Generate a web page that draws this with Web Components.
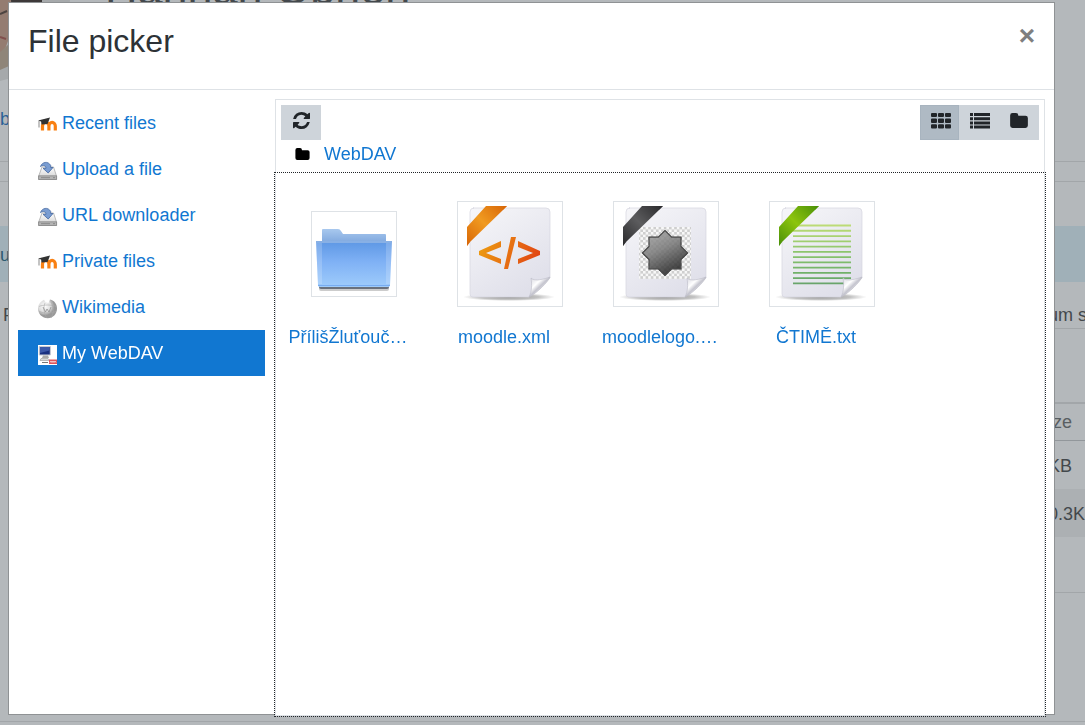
<!DOCTYPE html>
<html lang="en">
<head>
<meta charset="utf-8">
<title>File picker</title>
<style>
html, body {
  margin: 0;
  height: 100%;
}
body {
  font: 18px/22px "Liberation Sans", Arial, sans-serif;
  color: #343a40;
  background: #b4b8bb;
  overflow: hidden;
  --link: #1177d1;
  --line: #dee2e6;
}
</style>
</head>
<body>
<course-page></course-page>
<file-picker heading="File picker">
  <repo-item slot="repos" icon="moodle">Recent files</repo-item>
  <repo-item slot="repos" icon="drive">Upload a file</repo-item>
  <repo-item slot="repos" icon="drive">URL downloader</repo-item>
  <repo-item slot="repos" icon="moodle">Private files</repo-item>
  <repo-item slot="repos" icon="globe">Wikimedia</repo-item>
  <repo-item slot="repos" icon="computer" active>My WebDAV</repo-item>
  <picker-toolbar slot="toolbar" path="WebDAV"></picker-toolbar>
  <file-tile kind="folder">PřílišŽluťouč…</file-tile>
  <file-tile kind="xml">moodle.xml</file-tile>
  <file-tile kind="image">moodlelogo.…</file-tile>
  <file-tile kind="text">ČTIMĚ.txt</file-tile>
</file-picker>

<script>
const glyphs = {
  refresh: `<svg width="17" height="17" viewBox="0 0 1536 1536" fill="currentColor" aria-hidden="true"><path d="M1511 928q0 5-1 7-64 268-268 434.500t-478 166.500q-146 0-282.500-55t-243.500-157l-129 129q-19 19-45 19t-45-19-19-45v-448q0-26 19-45t45-19h448q26 0 45 19t19 45-19 45l-137 137q71 66 161 102t187 36q134 0 250-65t186-179q11-17 53-117 8-23 30-23h192q13 0 22.500 9.500t9.500 22.500zm25-800v448q0 26-19 45t-45 19h-448q-26 0-45-19t-19-45 19-45l138-138q-148-137-349-137-134 0-250 65t-186 179q-11 17-53 117-8 23-30 23h-199q-13 0-22.500-9.500t-9.500-22.500v-7q65-268 270-434.500t480-166.500q146 0 284 55.500t245 156.500l130-129q19-19 45-19t45 19 19 45z"/></svg>`,
  grid: `<svg width="20" height="16" viewBox="0 0 20 16" fill="currentColor" aria-hidden="true"><path d="M1 0h4q1 0 1 1v2q0 1-1 1H1q-1 0-1-1V1q0-1 1-1zm7 0h4q1 0 1 1v2q0 1-1 1H8q-1 0-1-1V1q0-1 1-1zm7 0h4q1 0 1 1v2q0 1-1 1h-4q-1 0-1-1V1q0-1 1-1zM1 5.500h4q1 0 1 1v2.500q0 1-1 1H1q-1 0-1-1V6.500q0-1 1-1zm7 0h4q1 0 1 1v2.500q0 1-1 1H8q-1 0-1-1V6.500q0-1 1-1zm7 0h4q1 0 1 1v2.500q0 1-1 1h-4q-1 0-1-1V6.500q0-1 1-1zM1 11.200h4q1 0 1 1v2.300q0 1-1 1H1q-1 0-1-1v-2.300q0-1 1-1zm7 0h4q1 0 1 1v2.300q0 1-1 1H8q-1 0-1-1v-2.300q0-1 1-1zm7 0h4q1 0 1 1v2.300q0 1-1 1h-4q-1 0-1-1v-2.300q0-1 1-1z"/></svg>`,
  list: `<svg width="20" height="16" viewBox="0 0 20 16" fill="currentColor" aria-hidden="true"><path d="M0 0h3v3H0zM4 0h16v3H4zM0 4.200h3v3H0zM4 4.200h16v3H4zM0 8.400h3v3H0zM4 8.400h16v3H4zM0 12.500h3v3H0zM4 12.500h16v3H4z"/></svg>`,
  folder: `<svg viewBox="0 0 1664 1408" fill="currentColor" aria-hidden="true"><path d="M0 224Q0 0 224 0h320q224 0 224 224v32h672q224 0 224 224v704q0 224-224 224H224q-224 0-224-224z"/></svg>`
};

const repoIcons = {
  moodle: `<path d="M4.500 15.500V11a3.200 3.600 0 0 1 6.400 0v4.500M10.900 15.500V11a3.200 3.600 0 0 1 6.400 0v4.500" fill="none" stroke="#f98012" stroke-width="3.200"/><path d="M0 5.500 12 2.500l-1.500 4-1 2.500-6 .6-.4-3.200z" fill="#333"/><path d="M1 6v6.500" stroke="#888"/>`,
  drive: `<defs><linearGradient id="d" x2="0" y2="1"><stop stop-color="#fff"/><stop offset="1" stop-color="#ccc"/></linearGradient></defs>
    <path d="M4 6h11.500l3 9v3.500H.7V15z" fill="url(#d)" stroke="#aaa" stroke-width=".8"/><path d="M.6 14.800h18v3.700H.6z" fill="#b4b4b4" stroke="#808080" stroke-width=".7"/><path d="M3 16.700h9m3 0h2" stroke="#888"/>
    <path d="M2.500 5.500C4 1 10-.5 12.700 4.500v2H15L10.200 12 5 7.300h3C7.800 4.500 5.500 3.800 2.500 5.500z" fill="#7a9dd2" stroke="#41669f" stroke-width=".8"/>`,
  globe: `<defs><radialGradient id="g" cx=".35" cy=".35"><stop stop-color="#fff"/><stop offset=".65" stop-color="#dcdcdc"/><stop offset="1" stop-color="#999"/></radialGradient></defs>
    <path d="M4 2 6 .8l1.500 2.400L10.500 4 12 .5c4.500 1 7 4.500 7 9 0 5.500-4 9.700-9.300 9.700S0 15 0 9.500C0 6.500 1.500 3.500 4 2z" fill="url(#g)"/>
    <path d="M1 7.500c4-2 13-2 17 0M1 12.500c5 2 13 2 17 0M7 4c-2 5-1 11 2 15M13 3c3 5 3 11 0 16" fill="none" stroke="#aaa" stroke-width=".6"/><path d="M5 8l2.500 5 1.500-3 2 3 2-5" fill="none" stroke="#888" stroke-width=".7"/>`,
  computer: `<path d="M0 0h19v20H0z" fill="#fff"/><path d="M1.300 1.500h11v8.500h-11z" fill="#1a3080" stroke="#c7cad2"/><path d="M2 2h9.500v3.500L2 8z" fill="#3c58a8"/><path d="M5 10.500h5l1 2.500H4z" fill="#aaa"/><path d="M3 13.500h7l1.500 2H2z" fill="#d8d8d8" stroke="#999" stroke-width=".6"/><path d="M4 17.500h6" stroke="#777"/><path d="M11 14.500h8V19h-8z" fill="#df555c"/><path d="M12 17.500l1-1.500 1 1.500 1-1.500 1 1.500 1-1.500 1 1.500" fill="none" stroke="#fff" stroke-width=".7"/>`
};

// white sheet with a curled corner and a coloured ribbon, contents drawn in between
function sheet(dark, light, inner) {
  return `<svg width="96" height="96" viewBox="1 0 96 96" aria-hidden="true">
<defs>
  <linearGradient id="page" x2=".6" y2="1"><stop stop-color="#f6f6f9"/><stop offset="1" stop-color="#e0e0ea"/></linearGradient>
  <linearGradient id="ribbon" gradientUnits="userSpaceOnUse" x1="6" y1="38" x2="44" y2="0"><stop stop-color="${dark}"/><stop offset=".5" stop-color="${light}"/><stop offset="1" stop-color="${dark}"/></linearGradient>
  <linearGradient id="curl" x1="0" y1="0" x2="1" y2="1"><stop stop-color="#d0d0da"/><stop offset=".35" stop-color="#fff"/><stop offset=".5" stop-color="#c4c4ce"/><stop offset=".65" stop-color="#eee"/></linearGradient>
  <radialGradient id="shadow"><stop stop-color="#777" stop-opacity=".8"/><stop offset=".65" stop-color="#888" stop-opacity=".5"/><stop offset="1" stop-color="#999" stop-opacity="0"/></radialGradient>
</defs>
<ellipse cx="48" cy="91" rx="46" ry="4" fill="url(#shadow)"/>
<path d="M12 2h73q4 0 4 4v66L68 91H12q-3 0-3-3V6q0-4 4-4z" fill="url(#page)" stroke="#d5d5df" stroke-width=".7"/>
${inner}
<path d="M68 91c3-6 3-12 2-19 4 4 13 1 19-1-1 4-14 17-21 20z" fill="url(#curl)" stroke="#bbbbc6" stroke-width=".6"/>
<path d="M25 0h21l-4 4L9 36l-3 4V21z" fill="url(#ribbon)"/><path d="M46 0l-4 4V0zM6 40l3-4H6z" fill="${dark}" opacity=".6"/></svg>`;
}

const textLines = Array.from({ length: 12 }, (_, i) =>
  `<path d="M20 ${19.500 + i * 5.270}h58" stroke="hsl(${78 + i * 4} ${58 - i * 3}% ${66 - i * 1.200}%)" stroke-width="1.800"/>`).join("");

const star = "M70.500 47 63.900 53.600 64 63 54.600 62.900 48 69.500 41.400 62.900 32 63 32.100 53.600 25.500 47 32.100 40.400 32 31 41.400 31.100 48 24.500 54.600 31.100 64 31 63.900 40.400z";

const thumbs = {
  folder: `<svg width="76" height="76" viewBox="0 0 76 76" aria-hidden="true">
<defs><linearGradient id="front" x2="0" y2="1"><stop stop-color="#5d97e4"/><stop offset=".45" stop-color="#7fb1f5"/><stop offset="1" stop-color="#9fccfb"/></linearGradient>
<linearGradient id="back" x2="0" y2="1"><stop stop-color="#a8c8ee"/><stop offset="1" stop-color="#82aadf"/></linearGradient></defs>
<rect x="3" y="70" width="70" height="5" rx="2" fill="#ccc"/><rect x="3" y="69" width="70" height="4" rx="2" fill="#6a717c"/>
<path d="M6 26V14q0-1 1-1h15q2 0 3 2l2 3h42q1 0 1 1v7z" fill="url(#back)"/>
<path d="M0 25h76l-2 44q0 2-2 2H4q-2 0-2-2z" fill="url(#front)"/><path d="M0 25h76v2H0z" fill="#88b0e5"/><path d="M0 27h6v41H2zM76 27h-6v41h4z" fill="#fff" opacity=".18"/><path d="M2 69h72v1H2z" fill="#78acf0"/></svg>`,
  xml: sheet("#d96808", "#f09a20", `<defs><linearGradient id="code" gradientUnits="userSpaceOnUse" x1="17" y1="35" x2="75" y2="60"><stop stop-color="#eda010"/><stop offset="1" stop-color="#e14414"/></linearGradient></defs>
<path d="M40 35v6l-15 6 15 6v5L18 49v-4zM57 35v6l15 6-15 6v5l22-9v-4zM50 31h5L47 63h-4z" fill="url(#code)"/>`),
  image: sheet("#2c2c2e", "#5c5c5e", `<defs><pattern id="check" width="5.200" height="5.200" patternUnits="userSpaceOnUse"><path d="M0 0h6v6H0z" fill="#f8f8f8"/><path d="M0 0h2.600v2.600H0zM2.600 2.600h2.600v2.600H2.600z" fill="#cfcfcf"/></pattern>
<linearGradient id="star" x1="0" y1="0" x2=".5" y2="1"><stop stop-color="#aaa"/><stop offset=".5" stop-color="#777"/><stop offset="1" stop-color="#222"/></linearGradient></defs>
<path d="M22 21h52v52H22z" fill="url(#check)"/>
<path d="${star}" fill="url(#star)" stroke="#333" stroke-width="1.200"/>
<path d="${star}" fill="url(#check)" opacity=".15"/>`),
  text: sheet("#4d9208", "#8cc40e", textLines)
};

const templatePage = document.createElement("template");
templatePage.innerHTML = `
<style>
:host {
  display: block;
  color: #43484c;
}
.hero {
  display: flex;
  gap: 32px;
  height: 81px;
}
.hero svg { flex: none; }
h1 {
  margin: -37px 0 0;
  font-size: 45px;
  line-height: 52px;
  font-weight: 400;
}
.contact {
  height: 80px;
  line-height: 76px;
  border-bottom: 1px solid #a2a6a9;
}
a { color: #2a6196; text-decoration: none; }
.tabs { height: 19px; border-bottom: 1px solid #a2a6a9; }
.columns { display: flex; padding-top: 44px; }
.main { flex: 1; }
.side { width: 37px; white-space: nowrap; }
.info {
  height: 56px;
  line-height: 58px;
  color: #2c5a70;
  background: #a0b0b8;
}
.desc {
  padding: 22px 3px 2px;
}
.side .desc { padding: 22px 0 2px; border-bottom: 1px solid #a2a6a9; }
table {
  width: 100%;
  margin-top: 73px;
  border-collapse: collapse;
  border-bottom: 1px solid #a2a6a9;
}
th {
  height: 36px;
  padding: 0 5px;
  font-weight: 400;
  text-align: left;
  color: #595e62;
  border-top: 2px solid #a2a6a9;
  border-bottom: 1px solid #92979b;
}
td { height: 46px; padding: 2px 0 0; }
.even td { background: #acb0b3; }
.end td { height: 53px; }
footer { margin-top: 128px; border-top: 1px solid #a2a6a9; }
</style>
<div class="hero">
  <svg width="73" height="81" viewBox="0 0 73 81" aria-hidden="true"><path d="M0 0h73v81H0z" fill="#b4b8bb"/><path d="M0 0h70Q64 66 0 81z" fill="#a6a9ab"/><path d="M0 0h42v24H0z" fill="#3d3939"/><path d="M0 0h11q3 40-11 56z" fill="#947c71"/><path d="M0 52 9 44v22l-9 4z" fill="#8f8579"/><path d="M0 14 7 11" stroke="#4d4441" stroke-width="2"/><path d="M0 37l6 2" stroke="#814f4c" stroke-width="2"/></svg>
  <h1>Hannah Obrien</h1>
</div>
<div class="contact"><a href="#">b</a></div>
<div class="tabs"></div>
<div class="columns">
  <div class="main">
    <div class="info">u</div>
    <div class="desc">P</div>
  </div>
  <div class="side">
    <div class="info"></div>
    <div class="desc">um s</div>
    <table>
      <tr><th>ze</th></tr>
      <tr><td>KB</td></tr>
      <tr class="even"><td>0.3K</td></tr>
      <tr class="end"><td></td></tr>
    </table>
  </div>
</div>
<footer></footer>
`;

class CoursePage extends HTMLElement {
  constructor() {
    super();
    this.attachShadow({ mode: "open" });
    this.shadowRoot.appendChild(templatePage.content.cloneNode(true));
  }
}

const templatePicker = document.createElement("template");
templatePicker.innerHTML = `
<style>
:host {
  position: fixed;
  inset: 0;
  display: flex;
  padding: 2px 30px 10px 8px;
}
.dialog {
  flex: 1;
  display: flex;
  flex-direction: column;
  background: #fff;
  border: 1px solid #8f9294;
}
header {
  display: flex;
  justify-content: space-between;
  align-items: flex-start;
  padding: 18px 19px 28px;
  border-bottom: 1px solid var(--line);
}
h3 {
  margin: 0;
  font-size: 32px;
  line-height: 40px;
  font-weight: 400;
  color: #2d3236;
}
.close {
  padding: 0;
  border: 0;
  background: none;
  font: bold 28px/30px "Liberation Sans", Arial, sans-serif;
  color: #7f7f7f;
}
.body {
  flex: 1;
  display: flex;
  gap: 10px;
  padding: 9px 9px 0;
}
nav {
  flex: none;
  width: 247px;
  padding-top: 1px;
}
.pane {
  flex: 1;
  display: flex;
  flex-direction: column;
  margin-bottom: -2px;
}
.files {
  flex: 1;
  display: flex;
  flex-wrap: wrap;
  align-content: flex-start;
  gap: 24px;
  padding: 25px 12px;
  background: #fff;
  border: 1px solid var(--line);
  border-top-color: #fff;
  outline: 1px dotted #212529;
}
</style>
<div class="dialog" role="dialog" aria-labelledby="title">
  <header>
    <h3 id="title"></h3>
    <button class="close" type="button" aria-label="Close">×</button>
  </header>
  <div class="body">
    <nav><slot name="repos"></slot></nav>
    <div class="pane">
      <slot name="toolbar"></slot>
      <div class="files"><slot></slot></div>
    </div>
  </div>
</div>
`;

class FilePicker extends HTMLElement {
  constructor() {
    super();
    this.attachShadow({ mode: "open" });
    this.shadowRoot.appendChild(templatePicker.content.cloneNode(true));
  }

  connectedCallback() {
    this.shadowRoot.querySelector("#title").textContent = this.getAttribute("heading");
    this.shadowRoot.querySelector(".close").addEventListener("click", () => this.remove());
    this.addEventListener("onSelect", this.selectHandler.bind(this));
  }

  selectHandler(e) {
    this.querySelectorAll("repo-item").forEach((item) => {
      item.toggleAttribute("active", item === e.target);
    });
  }
}

class RepoItem extends HTMLElement {
  constructor() {
    super();
    this.attachShadow({ mode: "open" });
  }

  connectedCallback() {
    this.shadowRoot.innerHTML = `
<style>
:host { display: block; }
a {
  display: flex;
  align-items: center;
  gap: 4px;
  height: 46px;
  padding: 0 20px;
  color: var(--link);
  text-decoration: none;
}
svg { flex: none; margin-top: 4px; }
:host([active]) a {
  color: #fff;
  background: var(--link);
}
</style>
<a href="#"><svg width="20" height="20" viewBox="0 0 20 20" aria-hidden="true">${repoIcons[this.getAttribute("icon")]}</svg><span><slot></slot></span></a>`;
    this.shadowRoot.querySelector("a").addEventListener("click", (e) => {
      e.preventDefault();
      this.dispatchEvent(new CustomEvent("onSelect", { bubbles: true }));
    });
  }
}

class PickerToolbar extends HTMLElement {
  constructor() {
    super();
    this.attachShadow({ mode: "open" });
  }

  connectedCallback() {
    this.shadowRoot.innerHTML = `
<style>
:host {
  display: block;
  padding: 5px;
  border: 1px solid var(--line);
  border-bottom: 0;
}
.tools {
  display: flex;
  justify-content: space-between;
}
.views { display: flex; }
button {
  display: flex;
  justify-content: center;
  align-items: center;
  width: 40px;
  height: 35px;
  padding: 0 0 4px;
  border: 0;
  color: #212529;
  background: #ced4da;
}
.views button { padding: 0 0 3px 1px; }
.views button.on {
  width: 39px;
  padding: 0 0 3px 2px;
  background: #afbac4;
  border: 1px solid #a8b4bf;
}
.views button:last-child { padding: 0 0 4px; }
.views button:last-child svg { width: 18px; height: 15px; }
svg { flex: none; }
.path {
  display: flex;
  align-items: center;
  gap: 14px;
  height: 28px;
  padding: 0 14px;
}
.path svg { width: 15px; height: 12px; color: #000; }
a { color: var(--link); text-decoration: none; }
</style>
<div class="tools">
  <button type="button" aria-label="Refresh">${glyphs.refresh}</button>
  <div class="views">
    <button type="button" class="on" aria-label="Icons">${glyphs.grid}</button>
    <button type="button" aria-label="Details">${glyphs.list}</button>
    <button type="button" aria-label="Tree">${glyphs.folder}</button>
  </div>
</div>
<div class="path">${glyphs.folder}<a href="#">${this.getAttribute("path")}</a></div>`;
  }
}

class FileTile extends HTMLElement {
  constructor() {
    super();
    this.attachShadow({ mode: "open" });
  }

  connectedCallback() {
    this.shadowRoot.innerHTML = `
<style>
:host { display: block; width: 132px; }
a {
  color: var(--link);
  text-decoration: none;
}
.thumb {
  display: flex;
  justify-content: center;
  align-items: center;
  height: 110px;
}
.frame {
  display: flex;
  padding: 4px;
  border: 1px solid var(--line);
}
.name {
  width: 120px;
  margin-top: 17px;
  text-align: center;
  white-space: nowrap;
}
</style>
<a href="#">
  <div class="thumb"><div class="frame">${thumbs[this.getAttribute("kind")]}</div></div>
  <div class="name"><slot></slot></div>
</a>`;
  }
}

window.customElements.define("course-page", CoursePage);
window.customElements.define("file-picker", FilePicker);
window.customElements.define("repo-item", RepoItem);
window.customElements.define("picker-toolbar", PickerToolbar);
window.customElements.define("file-tile", FileTile);
</script>
</body>
</html>
